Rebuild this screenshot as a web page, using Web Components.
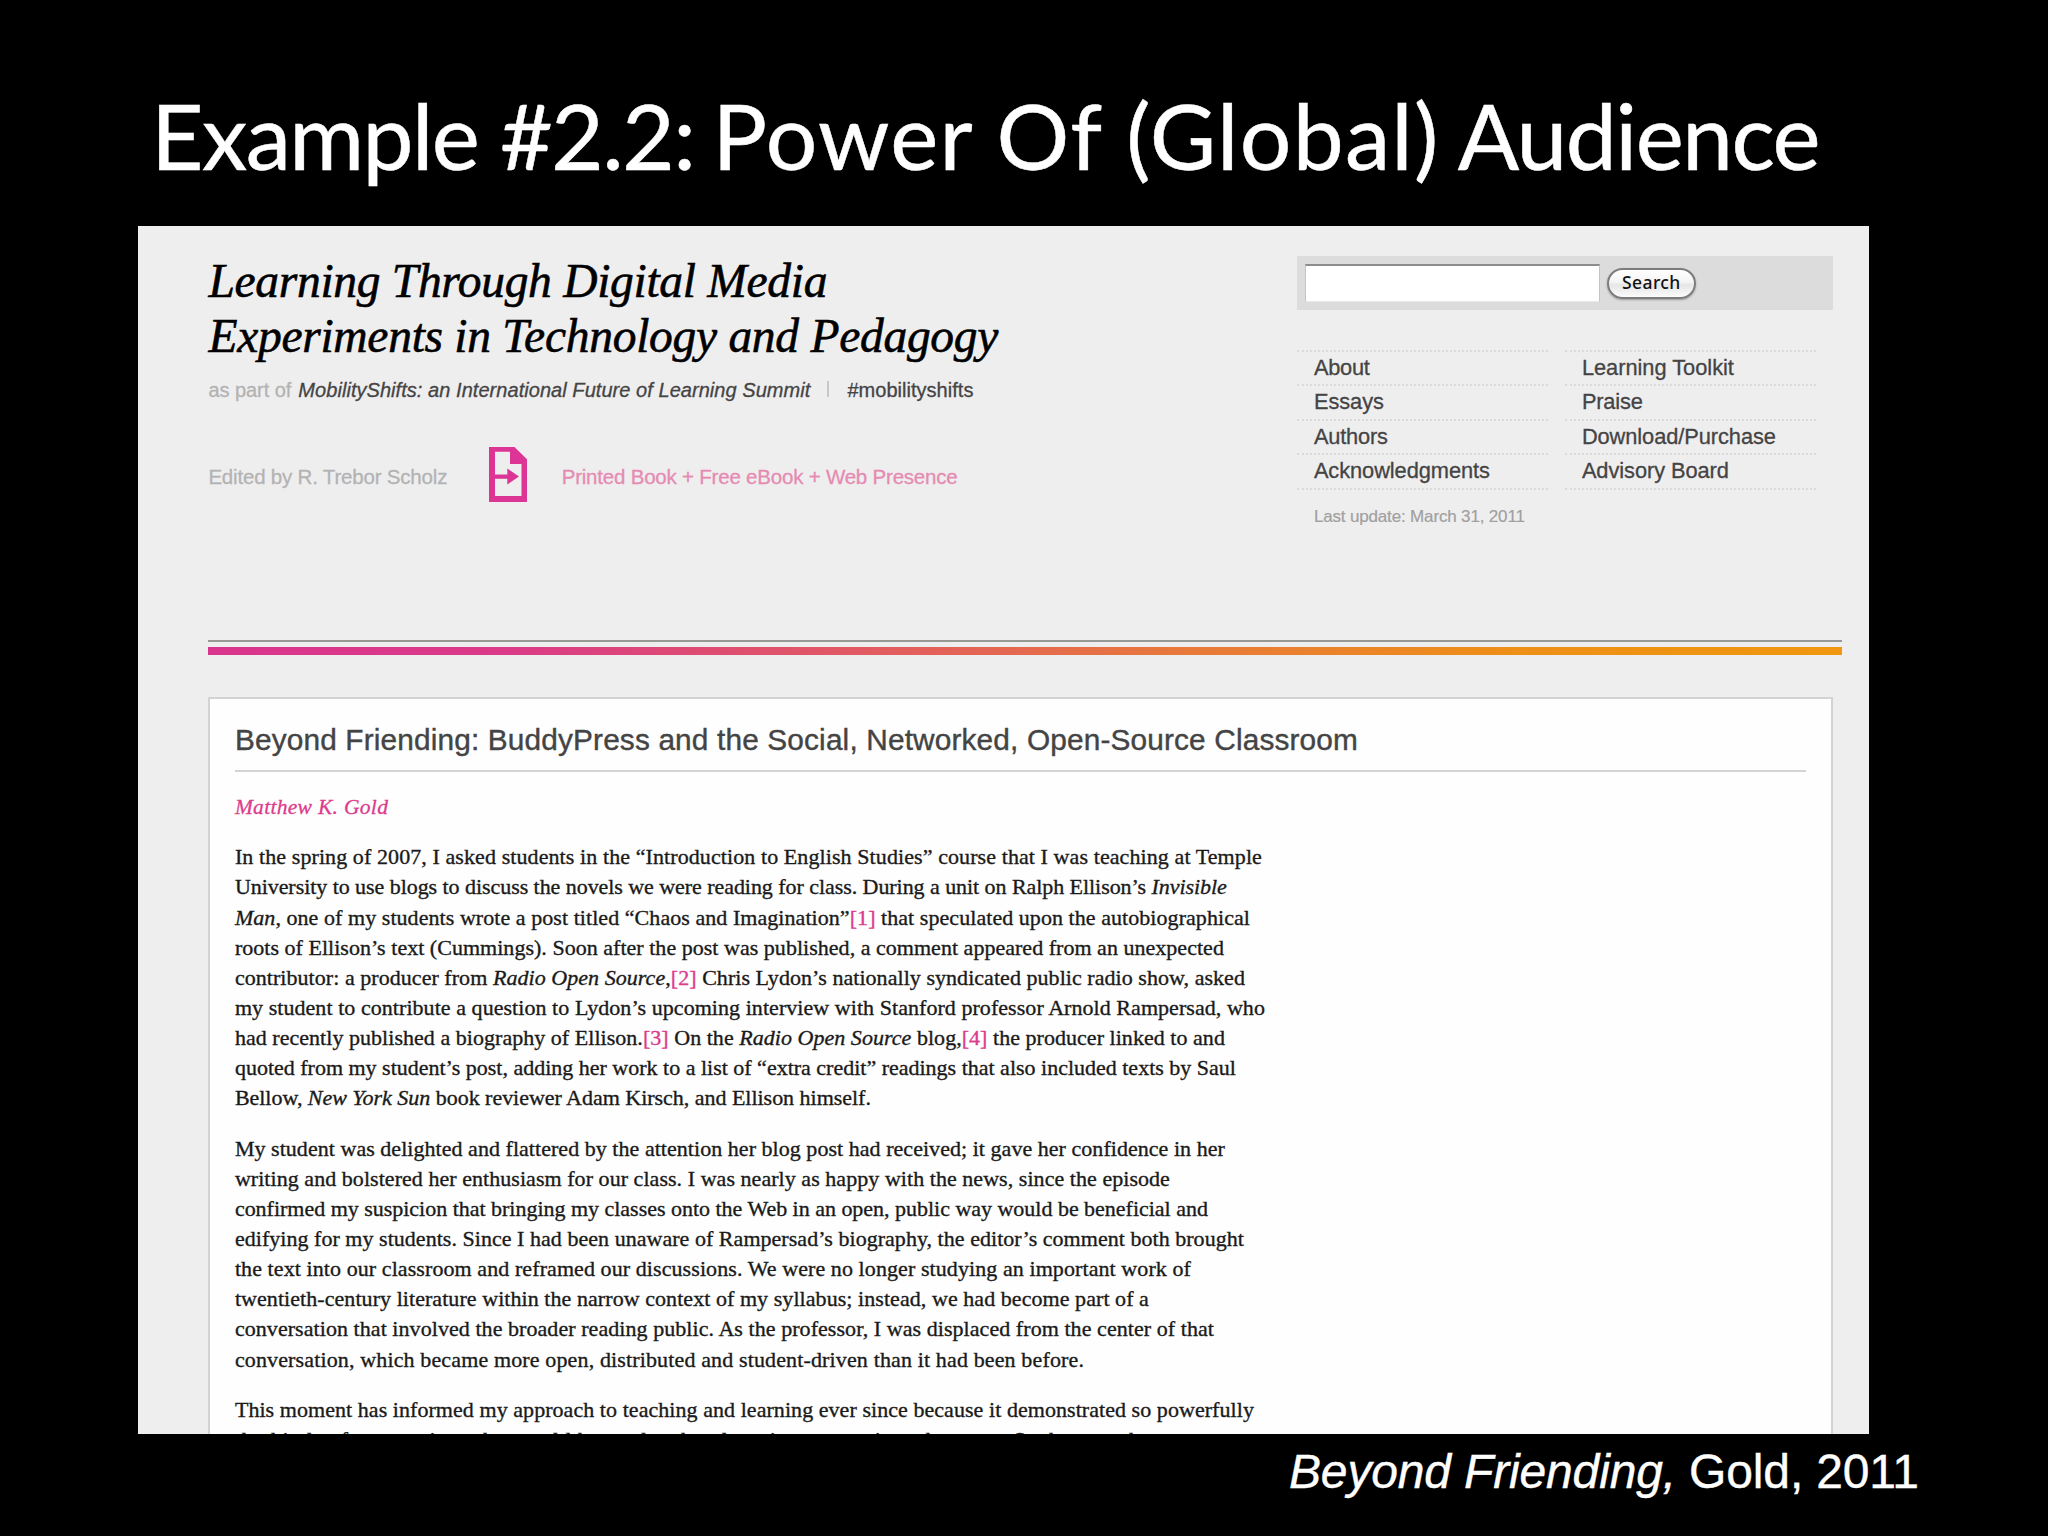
<!DOCTYPE html>
<html lang="en">
<head>
    <meta charset="UTF-8">
    <title>Example #2.2: Power Of (Global) Audience</title>
    <style>
        body{
            margin:0;
            background:#000;
        }
        em{
            font-style:italic;
        }
        .link{
            color:#dc3c8c;
        }
        .grey{
            color:#b3b3b3;
        }
    </style>
</head>
<body>
    <slide-deck>
        <fit-line slot="title" width="545">Example #2.2:</fit-line>
        <fit-line slot="title" width="726">Power Of (Global)</fit-line>
        <fit-line slot="title" width="363">Audience</fit-line>
        <site-header slot="page">
            <fit-line slot="heading" width="619">Learning Through Digital Media</fit-line>
            <fit-line slot="heading" width="790">Experiments in Technology and Pedagogy</fit-line>
            <fit-line slot="part" class="grey" width="83">as part of</fit-line>
            <fit-line slot="part" width="512"><em>MobilityShifts: an International Future of Learning Summit</em></fit-line>
            <fit-line slot="tag" width="126">#mobilityshifts</fit-line>
            <fit-line slot="editor" width="239">Edited by R. Trebor Scholz</fit-line>
            <fit-line slot="formats" width="396">Printed Book + Free eBook + Web Presence</fit-line>
            <search-box slot="side"></search-box>
            <nav-list slot="side">
                <nav-item width="56">About</nav-item>
                <nav-item width="152">Learning Toolkit</nav-item>
                <nav-item width="70">Essays</nav-item>
                <nav-item width="61">Praise</nav-item>
                <nav-item width="74">Authors</nav-item>
                <nav-item width="194">Download/Purchase</nav-item>
                <nav-item width="176">Acknowledgments</nav-item>
                <nav-item width="147">Advisory Board</nav-item>
            </nav-list>
            <fit-line slot="updated" width="211">Last update: March 31, 2011</fit-line>
        </site-header>
        <color-rule slot="page"></color-rule>
        <article-card slot="page">
            <fit-line slot="title" width="1123">Beyond Friending: BuddyPress and the Social, Networked, Open-Source Classroom</fit-line>
            <fit-line slot="author" width="153">Matthew K. Gold</fit-line>
            <text-block>
                <fit-line width="1027">In the spring of 2007, I asked students in the “Introduction to English Studies” course that I was teaching at Temple</fit-line>
                <fit-line width="992">University to use blogs to discuss the novels we were reading for class. During a unit on Ralph Ellison’s <em>Invisible</em></fit-line>
                <fit-line width="1015"><em>Man</em>, one of my students wrote a post titled “Chaos and Imagination”<span class="link">[1]</span> that speculated upon the autobiographical</fit-line>
                <fit-line width="989">roots of Ellison’s text (Cummings). Soon after the post was published, a comment appeared from an unexpected</fit-line>
                <fit-line width="1010">contributor: a producer from <em>Radio Open Source</em>,<span class="link">[2]</span> Chris Lydon’s nationally syndicated public radio show, asked</fit-line>
                <fit-line width="1030">my student to contribute a question to Lydon’s upcoming interview with Stanford professor Arnold Rampersad, who</fit-line>
                <fit-line width="990">had recently published a biography of Ellison.<span class="link">[3]</span> On the <em>Radio Open Source</em> blog,<span class="link">[4]</span> the producer linked to and</fit-line>
                <fit-line width="1001">quoted from my student’s post, adding her work to a list of “extra credit” readings that also included texts by Saul</fit-line>
                <fit-line width="636">Bellow, <em>New York Sun</em> book reviewer Adam Kirsch, and Ellison himself.</fit-line>
            </text-block>
            <text-block>
                <fit-line width="990">My student was delighted and flattered by the attention her blog post had received; it gave her confidence in her</fit-line>
                <fit-line width="935">writing and bolstered her enthusiasm for our class. I was nearly as happy with the news, since the episode</fit-line>
                <fit-line width="973">confirmed my suspicion that bringing my classes onto the Web in an open, public way would be beneficial and</fit-line>
                <fit-line width="1009">edifying for my students. Since I had been unaware of Rampersad’s biography, the editor’s comment both brought</fit-line>
                <fit-line width="956">the text into our classroom and reframed our discussions. We were no longer studying an important work of</fit-line>
                <fit-line width="914">twentieth-century literature within the narrow context of my syllabus; instead, we had become part of a</fit-line>
                <fit-line width="979">conversation that involved the broader reading public. As the professor, I was displaced from the center of that</fit-line>
                <fit-line width="849">conversation, which became more open, distributed and student-driven than it had been before.</fit-line>
            </text-block>
            <text-block>
                <fit-line width="1019">This moment has informed my approach to teaching and learning ever since because it demonstrated so powerfully</fit-line>
                <fit-line width="950">the kinds of connections that could be made when learning moves into the open. Such an exchange</fit-line>
            </text-block>
        </article-card>
        <span slot="caption"><fit-line width="630"><em>Beyond Friending,</em> Gold, 2011</fit-line></span>
    </slide-deck>
</body>
<script>
    class BaseElement extends HTMLElement{
        constructor(){
            super();
            const shadow = this.attachShadow({mode:'open'});
            shadow.innerHTML = this.render();
        }
        render(){
            return '<slot></slot>';
        }
    }

    // spreads or tightens the letters so that the line is exactly `width` px wide
    function fitText(el, box){
        const width = Number(el.getAttribute('width'));
        const count = el.textContent.trim().length;
        if(!width || count < 2) return;
        el.style.letterSpacing = '0px';
        const natural = box.getBoundingClientRect().width;
        el.style.letterSpacing = (width - natural) / (count - 1) + 'px';
    }

    class FitLine extends BaseElement{
        render(){
            return `
                <style>
                    :host{ display:block; white-space:nowrap; }
                    span{ display:inline-block; }
                </style>
                <span><slot></slot></span>
            `;
        }
        connectedCallback(){
            requestAnimationFrame(()=>this.fit());
        }
        fit(){
            fitText(this, this.shadowRoot.querySelector('span'));
        }
    }

    class NavItem extends FitLine{
        render(){
            return `
                <style>
                    :host{
                        display:block;
                        box-sizing:border-box;
                        height:34.4px;
                        padding-left:17px;
                        border-top:2px dotted #dadada;
                        font-size:21.8px;
                        line-height:31px;
                        color:#444;
                        -webkit-text-stroke:.3px currentColor;
                        white-space:nowrap;
                    }
                    span{ display:inline-block; }
                </style>
                <span><slot></slot></span>
            `;
        }
    }

    class NavList extends BaseElement{
        render(){
            return `
                <style>
                    :host{
                        display:grid;
                        grid-template-columns:251px 251px;
                        column-gap:17px;
                        margin-top:40px;
                    }
                    i{ border-top:2px dotted #dadada; }
                </style>
                <slot></slot><i></i><i></i>
            `;
        }
    }

    class SearchBox extends BaseElement{
        render(){
            return `
                <style>
                    :host{
                        display:flex;
                        align-items:center;
                        gap:7px;
                        box-sizing:border-box;
                        width:536px;
                        height:54px;
                        padding-left:8px;
                        background:#dcdcdc;
                    }
                    .field{
                        box-sizing:border-box;
                        width:295px;
                        height:38px;
                        background:#fff;
                        border:1px solid #c4c4c4;
                        border-top:2px solid #8c8c8c;
                        border-bottom-color:#e8e8e8;
                    }
                    .button{
                        box-sizing:border-box;
                        width:89px;
                        height:31px;
                        border:2px solid #7c7c7c;
                        border-radius:16px;
                        background:linear-gradient(#fff 0%,#f4f4f4 45%,#e6e6e6 55%,#fbfbfb 100%);
                        box-shadow:0 1px 2px rgba(0,0,0,.3);
                        font:500 17.5px/25px "Noto Sans",sans-serif;
                        letter-spacing:.4px;
                        text-align:center;
                        color:#111;
                    }
                </style>
                <div class="field"></div>
                <div class="button">Search</div>
            `;
        }
    }

    class BookIcon extends BaseElement{
        render(){
            return `
                <style>
                    :host{ display:block; width:38px; height:55px; }
                    svg{ display:block; }
                </style>
                <svg width="38" height="55" viewBox="0 0 38 55" fill="#dc3595">
                    <path fill-rule="evenodd" d="M0 0H25.5L38 12.3V55H0ZM6 4.7V49H32.5V17H21V4.7Z"/>
                    <path d="M5 27.5H18.3V21.5L30 29.5L18.3 37.5V31.7H5Z"/>
                </svg>
            `;
        }
    }

    class SiteHeader extends BaseElement{
        render(){
            return `
                <style>
                    :host{ display:flex; height:414px; }
                    .main{ width:1088.5px; padding-top:28px; }
                    .heading{
                        font:italic 47.5px/55px "Liberation Serif",serif;
                        color:#000;
                        -webkit-text-stroke:.6px #000;
                    }
                    .part{
                        display:flex;
                        gap:7px;
                        margin-top:11px;
                        font-size:20px;
                        line-height:30px;
                        color:#444;
                        -webkit-text-stroke:.3px currentColor;
                    }
                    .bar{
                        width:2px;
                        height:16px;
                        margin:6px 11px 0 10px;
                        background:#c8c8c8;
                    }
                    .book{
                        display:flex;
                        align-items:center;
                        margin-top:42px;
                        font-size:20.5px;
                        -webkit-text-stroke:.3px currentColor;
                    }
                    .editor{ width:280.3px; padding-top:5px; color:#b3b3b3; }
                    .formats{ margin-left:35px; padding-top:5px; color:#e58bb2; }
                    .side{ padding-top:30px; }
                    .updated{
                        margin:15px 0 0 17px;
                        font-size:17px;
                        line-height:24px;
                        color:#a0a0a0;
                        -webkit-text-stroke:.2px currentColor;
                    }
                </style>
                <div class="main">
                    <div class="heading"><slot name="heading"></slot></div>
                    <div class="part">
                        <slot name="part"></slot>
                        <div class="bar"></div>
                        <slot name="tag"></slot>
                    </div>
                    <div class="book">
                        <div class="editor"><slot name="editor"></slot></div>
                        <book-icon></book-icon>
                        <div class="formats"><slot name="formats"></slot></div>
                    </div>
                </div>
                <div class="side">
                    <slot name="side"></slot>
                    <div class="updated"><slot name="updated"></slot></div>
                </div>
            `;
        }
    }

    class ColorRule extends BaseElement{
        render(){
            return `
                <style>
                    :host{
                        display:block;
                        width:1633.5px;
                        height:8px;
                        padding-top:5px;
                        border-top:2px solid #989894;
                    }
                    div{
                        height:8px;
                        background:linear-gradient(90deg,#da358e 0%,#da3a88 18%,#e15a62 40%,#e8793a 60%,#ee8f16 80%,#f0970f 100%);
                    }
                </style>
                <div></div>
            `;
        }
    }

    class ArticleCard extends BaseElement{
        render(){
            return `
                <style>
                    :host{
                        display:block;
                        box-sizing:border-box;
                        width:1624.5px;
                        height:760px;
                        margin-top:42px;
                        padding:21px 25px 0 24.5px;
                        border:2px solid #d3d3d3;
                        background:#fefefe;
                    }
                    .title{
                        padding-bottom:10px;
                        border-bottom:2px solid #d4d4d4;
                        font-size:29.8px;
                        line-height:40px;
                        color:#444;
                        -webkit-text-stroke:.4px currentColor;
                    }
                    .author{
                        margin-top:20px;
                        font:italic 21.5px/30px "Liberation Serif",serif;
                        color:#dc3c8c;
                        -webkit-text-stroke:.3px currentColor;
                    }
                </style>
                <div class="title"><slot name="title"></slot></div>
                <div class="author"><slot name="author"></slot></div>
                <slot></slot>
            `;
        }
    }

    class TextBlock extends BaseElement{
        render(){
            return `
                <style>
                    :host{
                        display:block;
                        margin-top:20.3px;
                        font:22px/30.13px "Liberation Serif",serif;
                        color:#1a1a1a;
                        -webkit-text-stroke:.35px currentColor;
                    }
                </style>
                <slot></slot>
            `;
        }
    }

    class SlideDeck extends BaseElement{
        render(){
            return `
                <style>
                    :host{
                        display:flex;
                        flex-direction:column;
                        width:2048px;
                        height:1536px;
                        overflow:hidden;
                        background:#000;
                        font-family:"Liberation Sans",sans-serif;
                    }
                    .title{
                        display:flex;
                        gap:18px;
                        box-sizing:border-box;
                        height:226px;
                        padding:70px 0 0 151px;
                        font:91px/130px Lato,sans-serif;
                        color:#fff;
                        -webkit-text-stroke:.5px #fff;
                    }
                    .page{
                        box-sizing:border-box;
                        width:1730.5px;
                        height:1208px;
                        margin-left:138px;
                        padding-left:70.4px;
                        overflow:hidden;
                        background:#efeeef;
                    }
                    .caption{
                        padding:10px 0 0 1289px;
                        font-size:48px;
                        line-height:56px;
                        color:#fff;
                        -webkit-text-stroke:.4px #fff;
                    }
                </style>
                <div class="title"><slot name="title"></slot></div>
                <div class="page"><slot name="page"></slot></div>
                <div class="caption"><slot name="caption"></slot></div>
            `;
        }
    }

    customElements.define('book-icon',BookIcon);
    customElements.define('slide-deck',SlideDeck);
    customElements.define('site-header',SiteHeader);
    customElements.define('search-box',SearchBox);
    customElements.define('nav-list',NavList);
    customElements.define('color-rule',ColorRule);
    customElements.define('article-card',ArticleCard);
    customElements.define('text-block',TextBlock);
    customElements.define('nav-item',NavItem);
    customElements.define('fit-line',FitLine);
</script>
</html>
